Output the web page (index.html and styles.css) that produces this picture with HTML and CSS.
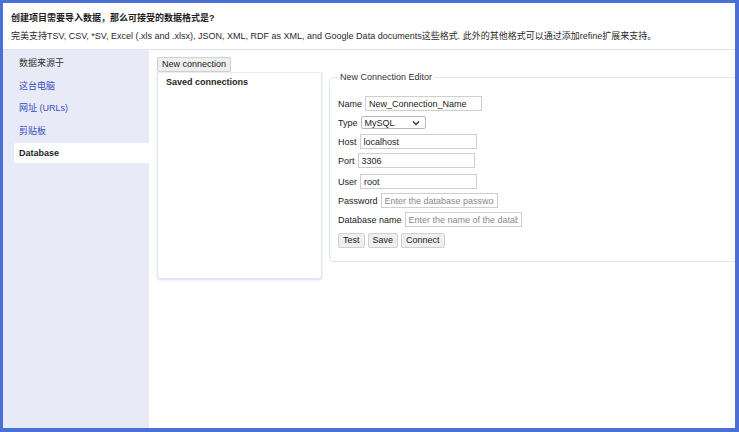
FILE: index.html
```html
<!DOCTYPE html>
<html lang="zh">
<head>
<meta charset="utf-8">
<title>创建项目</title>
<link rel="stylesheet" href="styles.css">
</head>
<body>
<div class="frame">
  <header class="header">
    <div class="title">创建项目需要导入数据，那么可接受的数据格式是?</div>
    <div class="subtitle">完美支持TSV, CSV, *SV, Excel (.xls and .xlsx), JSON, XML, RDF as XML, and Google Data documents这些格式. 此外的其他格式可以通过添加refine扩展来支持。</div>
  </header>
  <div class="body">
    <nav class="sidebar">
      <div class="side-item side-label">数据来源于</div>
      <div class="side-item side-link">这台电脑</div>
      <div class="side-item side-link">网址 (URLs)</div>
      <div class="side-item side-link">剪贴板</div>
      <div class="side-item side-selected">Database</div>
    </nav>
    <main class="main">
      <div class="toolbar"><button class="btn">New connection</button></div>
      <div class="columns">
        <section class="saved">
          <div class="saved-title">Saved connections</div>
        </section>
        <fieldset class="editor">
          <legend class="legend">New Connection Editor</legend>
          <div class="row"><label class="lbl">Name</label><input class="field" type="text" value="New_Connection_Name"></div>
          <div class="row"><label class="lbl">Type</label>
            <div class="select"><span>MySQL</span><svg class="chev" width="8" height="6" viewBox="0 0 8 6"><path d="M1 1.5 L4 4.5 L7 1.5" fill="none" stroke="#333" stroke-width="1.3"/></svg></div>
          </div>
          <div class="row"><label class="lbl">Host</label><input class="field" type="text" value="localhost"></div>
          <div class="row"><label class="lbl">Port</label><input class="field" type="text" value="3306"></div>
          <div class="row row-gap"><label class="lbl">User</label><input class="field" type="text" value="root"></div>
          <div class="row"><label class="lbl">Password</label><input class="field" type="password" placeholder="Enter the database password"></div>
          <div class="row"><label class="lbl">Database name</label><input class="field" type="text" placeholder="Enter the name of the database"></div>
          <div class="row actions"><button class="btn">Test</button><button class="btn">Save</button><button class="btn">Connect</button></div>
        </fieldset>
      </div>
    </main>
  </div>
</div>
</body>
</html>
```

FILE: styles.css
```css
* { box-sizing: border-box; }
html, body { margin: 0; padding: 0; }
body {
  background: #4a6fd5;
  font-family: "Liberation Sans", Arial, "Noto Sans CJK SC", sans-serif;
  font-size: 9px;
  color: #222;
  width: 739px;
  height: 432px;
  overflow: hidden;
}
.frame {
  margin: 3px 0 0 3px;
  width: 732px;
  height: 425px;
  background: #fff;
  display: flex;
  flex-direction: column;
  overflow: hidden;
}
.header {
  height: 47px;
  padding: 7px 0 0 8px;
  border-bottom: 1px solid #dfe5f0;
  flex: none;
}
.title {
  font-weight: bold;
  line-height: 16px;
  color: #1e1e1e;
}
.subtitle {
  margin-top: 2px;
  line-height: 16px;
  color: #2a2a2a;
}
.body {
  flex: 1;
  display: flex;
  min-height: 0;
}
.sidebar {
  width: 146px;
  flex: none;
  background: #e8ebf7;
  padding-top: 2px;
}
.side-item {
  margin-left: 11px;
  padding-left: 5px;
  height: 22.5px;
  line-height: 22.5px;
}
.side-label { color: #333; }
.side-link { color: #3a4cc0; }
.side-selected {
  background: #fff;
  font-weight: bold;
  color: #1e1e1e;
  height: 20px;
  line-height: 20px;
  margin-top: 0.5px;
  border-radius: 3px 0 0 3px;
}
.main {
  flex: 1;
  padding: 7px 0 0 8px;
  min-width: 0;
  overflow: hidden;
}
.toolbar { height: 15px; }
.btn {
  font-family: inherit;
  font-size: 9px;
  color: #222;
  background: #efefef;
  border: 1px solid #d0d0d0;
  border-radius: 2px;
  height: 15px;
  padding: 0 4px;
  line-height: 13px;
  margin: 0;
}
.columns {
  display: flex;
  gap: 7px;
  align-items: flex-start;
}
.saved {
  flex: none;
  width: 165px;
  height: 207px;
  border: 1px solid #dfe4f2;
  border-top-color: #e8ebf3;
  border-radius: 0 0 3px 3px;
  box-shadow: 0 1px 2px rgba(90, 120, 220, 0.25);
  padding: 3px 0 0 8px;
}
.saved-title {
  font-weight: bold;
  line-height: 12px;
  color: #1e1e1e;
}
.editor {
  flex: none;
  width: 420px;
  margin: -1px 0 0 0;
  padding: 13px 8px 13px 8px;
  border: 1px solid #dfe5f0;
  border-radius: 4px;
  min-inline-size: 0;
}
.legend {
  padding: 0 2px;
  line-height: 12px;
  color: #333;
}
.row {
  display: flex;
  align-items: center;
  gap: 3px;
  height: 15px;
  margin-bottom: 4px;
}
.row-gap { margin-top: 6px; }
.lbl { color: #222; white-space: nowrap; }
.field {
  width: 117px;
  height: 15px;
  font-family: inherit;
  font-size: 9px;
  color: #222;
  border: 1px solid #cfcfcf;
  padding: 0 3px;
  margin: 0;
  background: #fff;
  border-radius: 0;
}
.field::placeholder { color: #8a8a8a; }
.select {
  width: 65px;
  height: 13px;
  border: 1px solid #b9b9b9;
  border-radius: 2px;
  display: flex;
  align-items: center;
  justify-content: space-between;
  padding: 0 5px 0 3px;
  background: #fff;
}
.chev { display: block; }
.actions { gap: 3px; margin-top: 6px; margin-bottom: 0; }
```
